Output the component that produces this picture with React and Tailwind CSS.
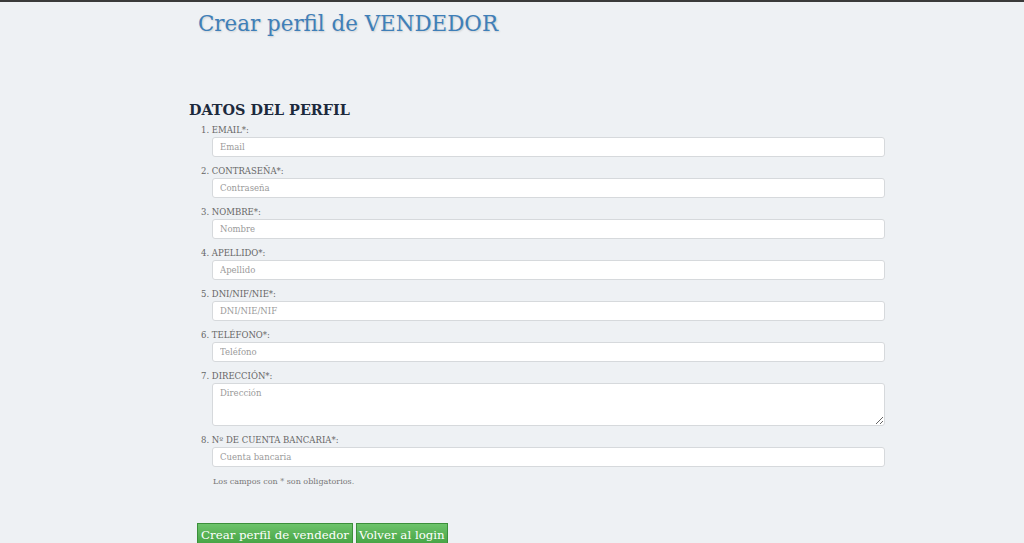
import React from "react";

const fields = [
  { label: "1. EMAIL*:", placeholder: "Email" },
  { label: "2. CONTRASEÑA*:", placeholder: "Contraseña" },
  { label: "3. NOMBRE*:", placeholder: "Nombre" },
  { label: "4. APELLIDO*:", placeholder: "Apellido" },
  { label: "5. DNI/NIF/NIE*:", placeholder: "DNI/NIE/NIF" },
  { label: "6. TELÉFONO*:", placeholder: "Teléfono" },
  { label: "7. DIRECCIÓN*:", placeholder: "Dirección", area: true },
  { label: "8. Nº DE CUENTA BANCARIA*:", placeholder: "Cuenta bancaria" },
];

function App() {
  return (
    <div className="min-h-[543px] bg-[#eef1f4] border-t-2 border-[#3a3a3a] font-['DejaVu_Serif',serif] overflow-hidden">
      <h1 className="pl-[198px] pt-[8px] text-[21.4px] leading-[28px] text-[#3f7fb8] [text-shadow:1px_1px_2px_rgba(0,0,0,0.15)]">
        Crear perfil de VENDEDOR
      </h1>
      <div className="pl-[189px] pt-[63px]">
        <h2 className="text-[14.4px] leading-[18px] font-bold text-[#1d2a3c]">
          DATOS DEL PERFIL
        </h2>
        <form className="pl-[12px] pt-[5px] w-[708px]">
          {fields.map((f) => (
            <div key={f.label} className="mb-[8px]">
              <label className="block h-[12px] text-[8.5px] leading-[12px] text-[#666] mb-px">
                {f.label}
              </label>
              {f.area ? (
                <textarea
                  placeholder={f.placeholder}
                  className="block ml-[11px] w-[673px] h-[43px] bg-white border border-[#d6d9dc] rounded-[3px] px-[7px] py-[3px] text-[8.5px] placeholder:text-[#9a9a9a] outline-none"
                />
              ) : (
                <input
                  placeholder={f.placeholder}
                  className="block ml-[11px] w-[673px] h-[20px] bg-white border border-[#d6d9dc] rounded-[3px] px-[7px] text-[8.5px] placeholder:text-[#9a9a9a] outline-none"
                />
              )}
            </div>
          ))}
          <p className="pl-[12px] pt-[1px] text-[8px] leading-[12px] text-[#777]">
            Los campos con * son obligatorios.
          </p>
        </form>
        <div className="flex gap-[3px] pl-[8px] pt-[35px]">
          <button className="px-[3px] h-[25px] text-[11.8px] text-white bg-gradient-to-b from-[#6cc36a] to-[#3f9f3e] border border-[#3b8f3a]">
            Crear perfil de vendedor
          </button>
          <button className="px-[2px] h-[25px] text-[11.8px] text-white bg-gradient-to-b from-[#6cc36a] to-[#3f9f3e] border border-[#3b8f3a]">
            Volver al login
          </button>
        </div>
      </div>
    </div>
  );
}

export default App;
